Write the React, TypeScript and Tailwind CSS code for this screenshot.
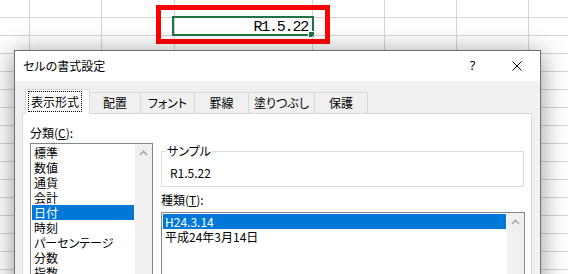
const cols = ['w-[30px]', 'w-[72px]', 'w-[73px]', 'w-[138px]', 'w-[72px]', 'w-[72px]', 'w-[72px]', 'w-[40px]'];
const rows = Array.from({ length: 16 }, (_, i) => i);

const jp = "[font-family:'Noto_Sans_CJK_JP',sans-serif] [font-feature-settings:'palt']";

const categories = ['標準', '数値', '通貨', '会計', '日付', '時刻', 'パーセンテージ', '分数', '指数'];
const kinds = ['H24.3.14', '平成24年3月14日'];
const tabs = [
  { label: '配置', w: 'w-[51px]' },
  { label: 'フォント', w: 'w-[54px]' },
  { label: '罫線', w: 'w-[54px]' },
  { label: '塗りつぶし', w: 'w-[66px]' },
  { label: '保護', w: 'w-[53px]' },
];

const SelectedCell = () => (
  <>
    <div className="flex h-full items-center justify-end pr-[4px] pt-[2px] font-['Liberation_Mono',monospace] text-[15px] leading-[17px] tracking-[-1.2px] text-black">
      R1.5.22
    </div>
    <div className="absolute -bottom-[1px] -left-[3px] -right-[2px] -top-[2px] border-2 border-[#217346]" />
    <div className="absolute -bottom-[3px] -right-[3px] h-[7px] w-[7px] border border-white bg-[#217346]" />
  </>
);

const Sheet = () => (
  <div className="flex flex-col bg-white">
    {rows.map((r) => (
      <div key={r} className="flex h-[18px] shrink-0">
        {cols.map((w, c) => (
          <div key={c} className={`relative ${w} shrink-0 border-b border-r border-[#d4d4d4]`}>
            {r === 1 && c === 3 ? <SelectedCell /> : null}
          </div>
        ))}
      </div>
    ))}
  </div>
);

const ScrollUp = () => (
  <div className="flex w-[17px] shrink-0 flex-col bg-[#f0f0f0]">
    <div className="flex h-[17px] items-center justify-center">
      <svg width="9" height="6" viewBox="0 0 9 6">
        <polyline points="1,5 4.5,1.5 8,5" fill="none" stroke="#a6a6a6" strokeWidth="1.6" />
      </svg>
    </div>
  </div>
);

const ListBox = ({ items, selected, className }: { items: string[]; selected: number; className: string }) => (
  <div className={`flex border border-[#828790] bg-white ${className}`}>
    <div className="flex-1 overflow-hidden p-[1px]">
      {items.map((it, i) => (
        <div
          key={it}
          className={`h-[15px] whitespace-nowrap pl-[2px] text-[12px] leading-[15px] ${
            i === selected ? 'bg-[#0078d7] text-white' : 'text-black'
          }`}>
          {it}
        </div>
      ))}
    </div>
    <ScrollUp />
  </div>
);

const Dialog = () => (
  <div className={`absolute left-[14px] top-[50px] h-[250px] w-[527px] border border-[#707070] bg-[#f0f0f0] shadow-[0_3px_24px_rgba(0,0,0,0.42)] ${jp}`}>
    <div className="flex h-[30px] items-center bg-white">
      <span className="pl-[8px] text-[12px] text-black">セルの書式設定</span>
      <div className="ml-auto flex h-full">
        <div className="flex w-[46px] items-center justify-center pl-[3px] font-['Noto_Sans',sans-serif] text-[13px] text-black">?</div>
        <div className="flex w-[46px] items-center justify-center">
          <svg width="10" height="10" viewBox="0 0 10 10">
            <path d="M0.5 0.5 L9.5 9.5 M9.5 0.5 L0.5 9.5" stroke="#000" strokeWidth="1" />
          </svg>
        </div>
      </div>
    </div>

    <div className="px-[7px] pt-[8px]">
      <div className="flex h-[24px] items-end pl-[3px]">
        <div className="relative z-10 -mb-px flex h-[25px] w-[65px] items-start border border-b-0 border-[#d9d9d9] bg-white pl-[2px] pt-[1px]">
          <span className="border border-dotted border-black px-[2px] py-[1px] text-[12px] leading-[17px] text-black">表示形式</span>
        </div>
        {tabs.map((t) => (
          <div
            key={t.label}
            className={`flex h-[21px] ${t.w} items-center justify-center border-r border-t border-[#d9d9d9] bg-[#f0f0f0] text-[12px] text-black`}>
            {t.label}
          </div>
        ))}
      </div>

      <div className="flex h-[200px] w-[510px] border border-[#d9d9d9] bg-white px-[7px]">
        <div className="flex w-[123px] shrink-0 flex-col">
          <div className="mt-[11px] text-[12px] leading-[16px] text-black">
            分類(<span className="underline">C</span>):
          </div>
          <ListBox items={categories} selected={4} className="mt-[2px] h-[160px]" />
        </div>

        <div className="ml-[8px] flex w-[364px] shrink-0 flex-col">
          <fieldset className="mr-[1px] mt-[29px] border border-[#dcdcdc] px-[4px] pb-[5px]">
            <legend className="px-[1px] text-[12px] leading-[16px] text-black">サンプル</legend>
            <div className="mt-[6px] pl-[4px] text-[12px] leading-[16px] text-black">R1.5.22</div>
          </fieldset>
          <div className="mt-[5px] text-[12px] leading-[16px] text-black">
            種類(<span className="underline">T</span>):
          </div>
          <ListBox items={kinds} selected={0} className="mt-[4px] h-[100px]" />
        </div>
      </div>
    </div>
  </div>
);

export default function App() {
  return (
    <div className="relative h-[274px] w-[568px] overflow-hidden bg-white">
      <Sheet />
      <div className="absolute left-[156px] top-[5px] h-[39px] w-[174px] border-[5px] border-[#ff0000]" />
      <Dialog />
    </div>
  );
}
